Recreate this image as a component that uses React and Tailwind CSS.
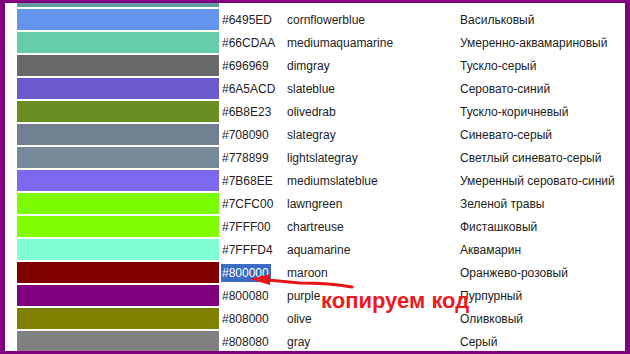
const rows = [
  { hex: "#5F9EA0", name: "", ru: "", hidden: true },
  { hex: "#6495ED", name: "cornflowerblue", ru: "Васильковый" },
  { hex: "#66CDAA", name: "mediumaquamarine", ru: "Умеренно-аквамариновый" },
  { hex: "#696969", name: "dimgray", ru: "Тускло-серый" },
  { hex: "#6A5ACD", name: "slateblue", ru: "Серовато-синий" },
  { hex: "#6B8E23", name: "olivedrab", ru: "Тускло-коричневый" },
  { hex: "#708090", name: "slategray", ru: "Синевато-серый" },
  { hex: "#778899", name: "lightslategray", ru: "Светлый синевато-серый" },
  { hex: "#7B68EE", name: "mediumslateblue", ru: "Умеренный серовато-синий" },
  { hex: "#7CFC00", name: "lawngreen", ru: "Зеленой травы" },
  { hex: "#7FFF00", name: "chartreuse", ru: "Фисташковый" },
  { hex: "#7FFFD4", name: "aquamarine", ru: "Аквамарин" },
  { hex: "#800000", name: "maroon", ru: "Оранжево-розовый", selected: true },
  { hex: "#800080", name: "purple", ru: "Пурпурный" },
  { hex: "#808000", name: "olive", ru: "Оливковый" },
  { hex: "#808080", name: "gray", ru: "Серый" },
];

function ColorRow({ row }) {
  return (
    <div className="flex items-center h-[21px] shrink-0">
      <div className="w-[202px] h-full shrink-0" style={{ backgroundColor: row.hex }} />
      <div className="w-[65px] ml-[3px] shrink-0">
        {!row.hidden &&
          (row.selected ? (
            <span className="inline-block -ml-[1px] pl-[1px] w-[50px] bg-[#3c6bc4] text-white leading-[18px]">
              {row.hex}
            </span>
          ) : (
            row.hex
          ))}
      </div>
      <div className="w-[173px] shrink-0">{row.name}</div>
      <div className="whitespace-nowrap">{row.ru}</div>
    </div>
  );
}

export default function App() {
  return (
    <div className="relative w-[630px] h-[354px] bg-white border-solid border-[#800080] border-l-[5px] border-r-[5px] border-t-[3px] border-b-[3px] overflow-hidden font-['Liberation_Sans',Arial,sans-serif] text-[12px] text-[#222]">
      <div className="h-full overflow-hidden">
        <div className="flex flex-col gap-[2px] -mt-[17px] pl-[12px]">
          {rows.map((row) => (
            <ColorRow key={row.hex} row={row} />
          ))}
        </div>
      </div>

      {/* annotation */}
      <svg className="absolute -left-[5px] -top-[3px] pointer-events-none" width="630" height="354">
        <path d="M352 287 Q330 283 300 283 L268 280" fill="none" stroke="#e8141b" strokeWidth="3" strokeLinecap="round" />
        <polygon points="250,279 270,274 270,285" fill="#e8141b" />
      </svg>
      <div className="absolute left-[316px] top-[287px] text-[22px] leading-[22px] font-bold text-[#ec1a1f] whitespace-nowrap">
        копируем код
      </div>
    </div>
  );
}
